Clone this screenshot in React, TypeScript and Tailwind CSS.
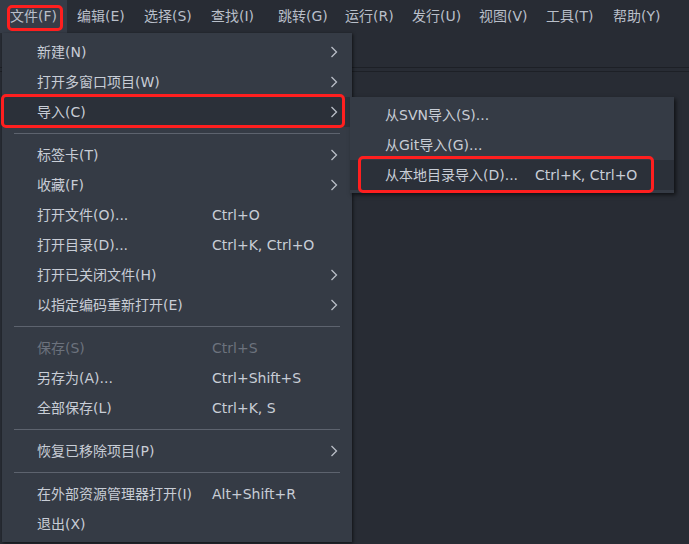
import React from "react";

type Item =
    | { sep: true }
    | { label: string; shortcut?: string; sub?: boolean; disabled?: boolean; active?: boolean };

const topMenus = ["文件(F)", "编辑(E)", "选择(S)", "查找(I)", "跳转(G)", "运行(R)", "发行(U)", "视图(V)", "工具(T)", "帮助(Y)"];

const fileMenu: Item[] = [
    { label: "新建(N)", sub: true },
    { label: "打开多窗口项目(W)", sub: true },
    { label: "导入(C)", sub: true, active: true },
    { sep: true },
    { label: "标签卡(T)", sub: true },
    { label: "收藏(F)", sub: true },
    { label: "打开文件(O)...", shortcut: "Ctrl+O" },
    { label: "打开目录(D)...", shortcut: "Ctrl+K, Ctrl+O" },
    { label: "打开已关闭文件(H)", sub: true },
    { label: "以指定编码重新打开(E)", sub: true },
    { sep: true },
    { label: "保存(S)", shortcut: "Ctrl+S", disabled: true },
    { label: "另存为(A)...", shortcut: "Ctrl+Shift+S" },
    { label: "全部保存(L)", shortcut: "Ctrl+K, S" },
    { sep: true },
    { label: "恢复已移除项目(P)", sub: true },
    { sep: true },
    { label: "在外部资源管理器打开(I)", shortcut: "Alt+Shift+R" },
    { label: "退出(X)" },
];

const importMenu = [
    { label: "从SVN导入(S)..." },
    { label: "从Git导入(G)..." },
    { label: "从本地目录导入(D)...", shortcut: "Ctrl+K, Ctrl+O", active: true },
];

function Chevron() {
    return (
        <svg width="8" height="12" viewBox="0 0 8 12" className="absolute right-[14px] top-[9px]">
            <polyline points="1.5,1 6.5,6 1.5,11" fill="none" stroke="#b9bec7" strokeWidth="1.3" />
        </svg>
    );
}

export default function App() {
    return (
        <div
            className="relative w-[689px] h-[544px] overflow-hidden bg-[#282c34] text-[14px] text-[#c8cdd6]"
            style={{ fontFamily: '"DejaVu Sans", "Noto Sans CJK SC", sans-serif' }}
        >
            {/* menubar */}
            <div className="flex h-[33px] items-center">
                {topMenus.map((m, i) => (
                    <div
                        key={m}
                        className={
                            "relative h-full flex items-center px-[10px] w-[67px] whitespace-nowrap text-[#b9bfc9] " +
                            (i === 0 ? "bg-[#363c47]" : "")
                        }
                    >
                        {m}
                        {i === 0 && (
                            <div className="absolute left-[7px] top-[5px] w-[56px] h-[26px] border-[3px] border-[#ff1f1f] rounded-[5px]" />
                        )}
                    </div>
                ))}
            </div>

            {/* tab strip lines */}
            <div className="h-[34px]" />
            <div className="h-px bg-[#1d2026]" />
            <div className="h-[3px]" />
            <div className="h-px bg-[#1d2026]" />

            {/* file menu */}
            <div className="absolute left-[2px] top-[33px] w-[350px] h-[509px] bg-[#353b45] pt-[4px] shadow-[1px_1px_3px_rgba(0,0,0,0.6)]">
                {fileMenu.map((it, i) =>
                    "sep" in it ? (
                        <div key={i} className="mx-[12px] my-[6px] h-px bg-[#5d636e]" />
                    ) : (
                        <div
                            key={i}
                            className={
                                "relative flex items-center h-[30px] pl-[35px] whitespace-nowrap " +
                                (it.active ? "bg-[#2b3039] " : "") +
                                (it.disabled ? "text-[#6c727d]" : "")
                            }
                        >
                            <span className="w-[175px]">{it.label}</span>
                            {it.shortcut && <span>{it.shortcut}</span>}
                            {it.sub && <Chevron />}
                            {it.active && (
                                <div className="absolute -left-[1px] -top-[3px] w-[344px] h-[34px] border-[3px] border-[#ff1f1f] rounded-[5px]" />
                            )}
                        </div>
                    )
                )}
            </div>

            {/* import submenu */}
            <div className="absolute left-[350px] top-[97px] w-[324px] h-[96px] bg-[#353b45] pt-[3px] shadow-[2px_2px_4px_rgba(0,0,0,0.6)]">
                {importMenu.map((it, i) => (
                    <div
                        key={i}
                        className={
                            "relative flex items-center h-[30px] pl-[35px] whitespace-nowrap " +
                            (it.active ? "bg-[#2b3039]" : "")
                        }
                    >
                        <span className="w-[150px]">{it.label}</span>
                        {it.shortcut && <span>{it.shortcut}</span>}
                        {it.active && (
                            <div className="absolute left-[8px] -top-[4px] w-[296px] h-[37px] border-[3px] border-[#ff1f1f] rounded-[5px]" />
                        )}
                    </div>
                ))}
            </div>
        </div>
    );
}
